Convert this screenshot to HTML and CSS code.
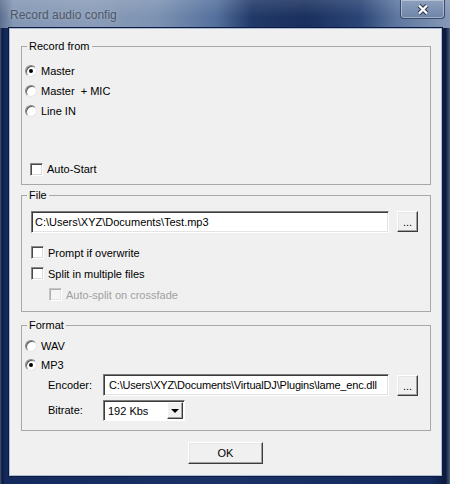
FILE: index.html
```html
<!DOCTYPE html>
<html lang="en">
<head>
  <meta charset="UTF-8">
  <title>Record audio config</title>
  <link rel="stylesheet" href="styles.css">
</head>
<body>
  <div class="window">
    <!-- title bar -->
    <div class="titlebar">
      <span class="title">Record audio config</span>
      <button class="close" title="Close">
        <svg width="12" height="11" viewBox="0 0 12 11">
          <path d="M2 1.5 L10 9.5 M10 1.5 L2 9.5" stroke="#27324c" stroke-width="4.2"/>
          <path d="M2 1.5 L10 9.5 M10 1.5 L2 9.5" stroke="#ffffff" stroke-width="2.4"/>
        </svg>
      </button>
    </div>

    <div class="client">
      <fieldset class="group group-record">
        <legend>Record from</legend>
        <label class="opt"><span class="radio on"></span>Master</label>
        <label class="opt"><span class="radio"></span>Master &nbsp;+ MIC</label>
        <label class="opt"><span class="radio"></span>Line IN</label>
        <label class="opt opt-auto"><span class="check"></span>Auto-Start</label>
      </fieldset>

      <fieldset class="group group-file">
        <legend>File</legend>
        <div class="file-row">
          <input class="field field-file" type="text" value="C:\Users\XYZ\Documents\Test.mp3">
          <button class="btn btn-browse">...</button>
        </div>
        <label class="opt opt-check opt-first"><span class="check"></span>Prompt if overwrite</label>
        <label class="opt opt-check"><span class="check"></span>Split in multiple files</label>
        <label class="opt opt-sub disabled"><span class="check"></span>Auto-split on crossfade</label>
      </fieldset>

      <fieldset class="group group-format">
        <legend>Format</legend>
        <label class="opt"><span class="radio"></span>WAV</label>
        <label class="opt opt-mp3"><span class="radio on"></span>MP3</label>
        <div class="param-row">
          <span class="param-label">Encoder:</span>
          <input class="field field-enc" type="text" value="C:\Users\XYZ\Documents\VirtualDJ\Plugins\lame_enc.dll">
          <button class="btn btn-browse btn-enc">...</button>
        </div>
        <div class="param-row param-bitrate">
          <span class="param-label">Bitrate:</span>
          <div class="combo">
            <span class="combo-text">192 Kbs</span>
            <span class="combo-arrow"></span>
          </div>
        </div>
      </fieldset>

      <div class="actions">
        <button class="btn btn-ok">OK</button>
      </div>
    </div>
  </div>
</body>
</html>
```

FILE: styles.css
```css
* {
  box-sizing: border-box;
}
body {
  margin: 0;
  width: 450px;
  height: 484px;
  overflow: hidden;
  font-family: 'Liberation Sans', Arial, sans-serif;
  font-size: 11px;
  color: #000;
}
.window {
  width: 450px;
  height: 484px;
  display: flex;
  flex-direction: column;
  background: linear-gradient(to right, #4a5a78 0, #0c1a3e 2px, #142a5c 5px, #1a3266 50%, #142a5c 96%, #0c1a3e 99%, #4a5a78 100%);
}
.titlebar {
  flex: none;
  height: 28px;
  display: flex;
  justify-content: space-between;
  align-items: flex-start;
  padding-left: 10px;
  background:
    linear-gradient(to bottom, rgba(255,255,255,0.12), rgba(255,255,255,0) 60%),
    linear-gradient(to right, #5d6f8e 0, #8497b5 3%, #8a9cb8 20%, #7d92b2 35%, #54709c 48%, #213968 56%, #1a305e 68%, #2a4475 80%, #5d769f 88%, #8698b6 100%);
}
.title {
  margin-top: 8px;
  font-size: 12px;
  line-height: 14px;
  color: #4d5868;
  text-shadow: 0 0 5px rgba(255,255,255,0.35);
}
.close {
  width: 45px;
  height: 19px;
  margin-right: 5px;
  padding: 0;
  display: flex;
  align-items: center;
  justify-content: center;
  border: 1px solid #3b4b6c;
  border-top: none;
  border-radius: 0 0 4px 4px;
  background: linear-gradient(to bottom, #8d9fbd, #6e84a8);
  box-shadow: inset 0 0 0 1px rgba(255,255,255,0.35);
}
.client {
  flex: 1;
  margin: 0 8px 8px 9px;
  padding: 10px 10px 0 11px;
  background: #f0f0f0;
  border: 1px solid #aebcd2;
  box-shadow: 0 0 0 1px #0b1a40;
  display: flex;
  flex-direction: column;
}

/* group boxes */
.group {
  margin: 0;
  min-width: 0;
  border: 1px solid #a8a8a8;
  padding: 0 0 0 3px;
}
.group legend {
  margin-left: 2px;
  padding: 0 2px;
  line-height: 14px;
}
.group-record {
  padding-top: 8px;
  padding-bottom: 5px;
}
.group-file {
  margin-top: 3px;
  padding-top: 9px;
  padding-bottom: 6px;
}
.group-format {
  margin-top: 6px;
  padding-top: 4px;
  padding-bottom: 9px;
}

/* options */
.opt {
  display: flex;
  align-items: center;
  height: 20px;
  white-space: nowrap;
}
.opt-auto {
  margin-top: 38px;
  padding-left: 5px;
}
.opt-check,
.opt-sub {
  height: 21px;
  padding-left: 6px;
}
.opt-first {
  margin-top: 9px;
}
.opt-sub {
  padding-left: 24px;
}
.opt-mp3 {
  height: 18px;
}
.disabled {
  color: #a0a0a0;
}
.radio {
  flex: none;
  position: relative;
  width: 12px;
  height: 12px;
  margin-right: 4px;
  border-radius: 50%;
  background: #fff;
  border: 1px solid;
  border-color: #8a8a8a #e6e6e6 #e6e6e6 #8a8a8a;
  box-shadow: inset 1px 1px 0 #5a5a5a;
}
.radio.on::after {
  content: "";
  position: absolute;
  left: 3px;
  top: 3px;
  width: 4px;
  height: 4px;
  border-radius: 50%;
  background: #000;
}
.check {
  flex: none;
  width: 13px;
  height: 13px;
  margin-right: 4px;
  background: #fff;
  border: 1px solid;
  border-color: #8a8a8a #ffffff #ffffff #8a8a8a;
  box-shadow: inset 1px 1px 0 #4a4a4a, inset -1px -1px 0 #dcdcdc;
}
.disabled .check {
  background: #f4f4f4;
  border-color: #c4c4c4 #fff #fff #c4c4c4;
  box-shadow: inset 1px 1px 0 #b0b0b0, inset -1px -1px 0 #e6e6e6;
}

/* text fields and buttons */
.field {
  height: 22px;
  margin: 0;
  padding: 0 0 0 3px;
  font: inherit;
  color: #000;
  background: #fff;
  border: 1px solid;
  border-color: #7a7a7a #fff #fff #7a7a7a;
  box-shadow: inset 1px 1px 0 #3c3c3c, inset -1px -1px 0 #e3e3e3;
  outline: none;
}
.file-row {
  display: flex;
  align-items: flex-start;
  padding-left: 6px;
}
.field-file {
  width: 358px;
}
.btn {
  margin: 0;
  padding: 0;
  font: inherit;
  color: #000;
  background: #f0f0f0;
  border: 1px solid;
  border-color: #fff #3c3c3c #3c3c3c #fff;
  box-shadow: inset -1px -1px 0 #a0a0a0, inset 1px 1px 0 #e6e6e6;
}
.btn-browse {
  width: 21px;
  height: 21px;
  margin-left: 8px;
  line-height: 14px;
}
.btn-enc {
  margin-top: 1px;
}
.param-row {
  display: flex;
  align-items: flex-start;
  height: 22px;
  padding-left: 23px;
}
.param-label {
  width: 55px;
  line-height: 22px;
}
.field-enc {
  width: 286px;
  padding-left: 5px;
  letter-spacing: -0.18px;
}
.param-bitrate {
  margin-top: 4px;
  height: 21px;
}
.param-bitrate .param-label {
  line-height: 21px;
}
.combo {
  width: 82px;
  height: 21px;
  display: flex;
  align-items: stretch;
  background: #fff;
  border: 1px solid;
  border-color: #7a7a7a #fff #fff #7a7a7a;
  box-shadow: inset 1px 1px 0 #3c3c3c;
  padding: 1px 1px 1px 1px;
}
.combo-text {
  flex: 1;
  padding-left: 3px;
  line-height: 18px;
}
.combo-arrow {
  position: relative;
  width: 16px;
  background: #f0f0f0;
  border: 1px solid;
  border-color: #fff #3c3c3c #3c3c3c #fff;
  box-shadow: inset -1px -1px 0 #a0a0a0;
}
.combo-arrow::after {
  content: "";
  position: absolute;
  left: 3px;
  top: 6px;
  border-left: 4px solid transparent;
  border-right: 4px solid transparent;
  border-top: 4px solid #000;
}
.actions {
  display: flex;
  justify-content: center;
  margin-top: 11px;
}
.btn-ok {
  width: 75px;
  height: 22px;
  margin-right: 1px;
}
```
